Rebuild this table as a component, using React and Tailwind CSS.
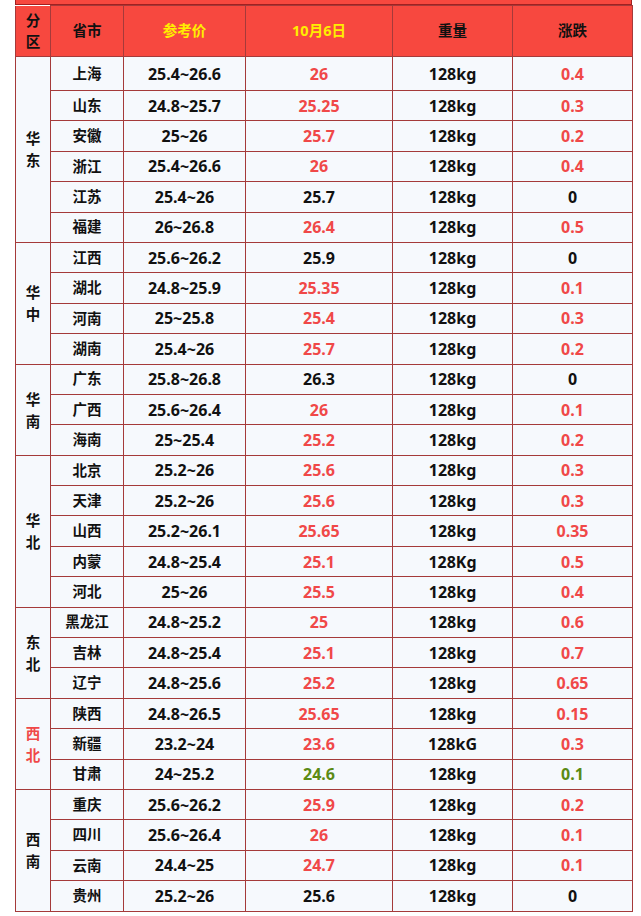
const RED = "text-[#f04848]";
const GREEN = "text-[#5b8a14]";

const groups = [
  {
    name: "华东",
    rows: [
      ["上海", "25.4~26.6", "26", "r", "128kg", "0.4", "r"],
      ["山东", "24.8~25.7", "25.25", "r", "128kg", "0.3", "r"],
      ["安徽", "25~26", "25.7", "r", "128kg", "0.2", "r"],
      ["浙江", "25.4~26.6", "26", "r", "128kg", "0.4", "r"],
      ["江苏", "25.4~26", "25.7", "b", "128kg", "0", "b"],
      ["福建", "26~26.8", "26.4", "r", "128kg", "0.5", "r"],
    ],
  },
  {
    name: "华中",
    rows: [
      ["江西", "25.6~26.2", "25.9", "b", "128kg", "0", "b"],
      ["湖北", "24.8~25.9", "25.35", "r", "128kg", "0.1", "r"],
      ["河南", "25~25.8", "25.4", "r", "128kg", "0.3", "r"],
      ["湖南", "25.4~26", "25.7", "r", "128kg", "0.2", "r"],
    ],
  },
  {
    name: "华南",
    rows: [
      ["广东", "25.8~26.8", "26.3", "b", "128kg", "0", "b"],
      ["广西", "25.6~26.4", "26", "r", "128kg", "0.1", "r"],
      ["海南", "25~25.4", "25.2", "r", "128kg", "0.2", "r"],
    ],
  },
  {
    name: "华北",
    rows: [
      ["北京", "25.2~26", "25.6", "r", "128kg", "0.3", "r"],
      ["天津", "25.2~26", "25.6", "r", "128kg", "0.3", "r"],
      ["山西", "25.2~26.1", "25.65", "r", "128kg", "0.35", "r"],
      ["内蒙", "24.8~25.4", "25.1", "r", "128Kg", "0.5", "r"],
      ["河北", "25~26", "25.5", "r", "128kg", "0.4", "r"],
    ],
  },
  {
    name: "东北",
    rows: [
      ["黑龙江", "24.8~25.2", "25", "r", "128kg", "0.6", "r"],
      ["吉林", "24.8~25.4", "25.1", "r", "128kg", "0.7", "r"],
      ["辽宁", "24.8~25.6", "25.2", "r", "128kg", "0.65", "r"],
    ],
  },
  {
    name: "西北",
    red: true,
    rows: [
      ["陕西", "24.8~26.5", "25.65", "r", "128kg", "0.15", "r"],
      ["新疆", "23.2~24", "23.6", "r", "128kG", "0.3", "r"],
      ["甘肃", "24~25.2", "24.6", "g", "128kg", "0.1", "g"],
    ],
  },
  {
    name: "西南",
    rows: [
      ["重庆", "25.6~26.2", "25.9", "r", "128kg", "0.2", "r"],
      ["四川", "25.6~26.4", "26", "r", "128kg", "0.1", "r"],
      ["云南", "24.4~25", "24.7", "r", "128kg", "0.1", "r"],
      ["贵州", "25.2~26", "25.6", "b", "128kg", "0", "b"],
    ],
  },
];

const tone = (c) => (c === "r" ? RED : c === "g" ? GREEN : "text-[#111]");

const cell = "border border-[#a53a3a] text-center align-middle p-0";
const num = "text-[16px]";

export default function App() {
  let idx = 0;
  return (
    <div
      className="w-[641px] h-[916px] bg-white overflow-hidden pl-[15px] font-bold text-[14.5px] text-[#111]"
      style={{ fontFamily: '"Noto Sans", "Noto Sans CJK SC", sans-serif' }}
    >
      <div className="w-[617px] h-[5px] bg-[#f7483f] border-x border-b border-[#a02020]" />
      <table className="table-fixed border-collapse w-[617px] border-x border-b border-[#b07a7a]">
        <colgroup>
          <col className="w-[35px]" />
          <col className="w-[73px]" />
          <col className="w-[122px]" />
          <col className="w-[147px]" />
          <col className="w-[120px]" />
          <col className="w-[120px]" />
        </colgroup>
        <thead>
          <tr className="h-[51px] bg-[#f7483f]">
            <th className={`${cell} border-t-0 leading-[21px]`}>
              分<br />区
            </th>
            <th className={cell}>省市</th>
            <th className={`${cell} text-[#ffee00]`}>参考价</th>
            <th className={`${cell} text-[#ffee00]`}>10月6日</th>
            <th className={cell}>重量</th>
            <th className={cell}>涨跌</th>
          </tr>
        </thead>
        <tbody>
          {groups.map((g) =>
            g.rows.map((r, i) => {
              const first = idx === 0;
              idx += 1;
              return (
                <tr
                  key={r[0]}
                  className={`${first ? "h-[34px]" : "h-[30.4px]"} bg-[#f6f9fd]`}
                >
                  {i === 0 && (
                    <td
                      rowSpan={g.rows.length}
                      className={`${cell} leading-[22px] ${g.red ? RED : ""}`}
                    >
                      {g.name[0]}
                      <br />
                      {g.name[1]}
                    </td>
                  )}
                  <td className={cell}>{r[0]}</td>
                  <td className={`${cell} ${num}`}>{r[1]}</td>
                  <td className={`${cell} ${num} ${tone(r[3])}`}>{r[2]}</td>
                  <td className={`${cell} ${num}`}>{r[4]}</td>
                  <td className={`${cell} ${num} ${tone(r[6])}`}>{r[5]}</td>
                </tr>
              );
            })
          )}
        </tbody>
      </table>
    </div>
  );
}
